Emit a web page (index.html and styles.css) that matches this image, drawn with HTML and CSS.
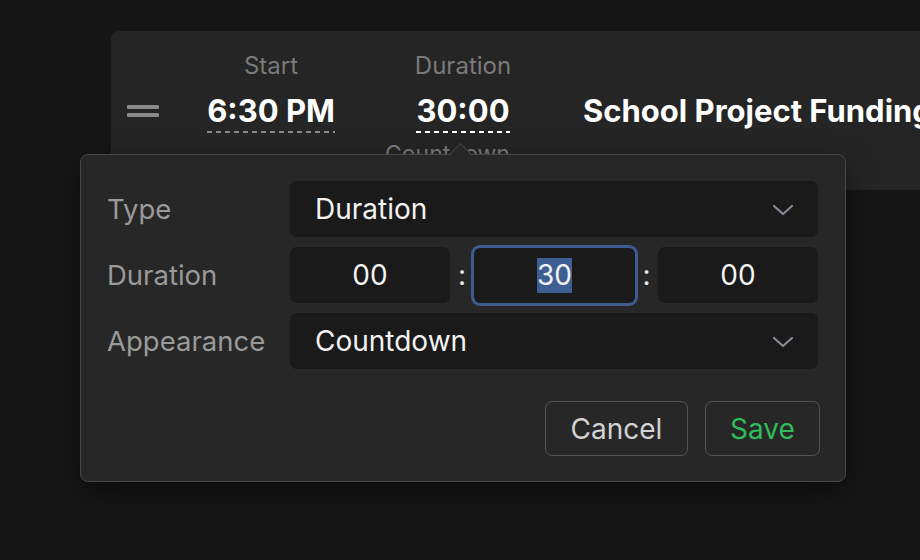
FILE: index.html
```html
<!DOCTYPE html>
<html>
<head>
<meta charset="utf-8">
<link rel="stylesheet" href="styles.css">
</head>
<body>
<div class="stage">
  <div class="row-card">
    <div class="handle"><span></span><span></span></div>
    <div class="col col-start">
      <div class="col-label">Start</div>
      <div class="col-value dashed-gray">6:30 PM</div>
    </div>
    <div class="col col-duration">
      <div class="col-label">Duration</div>
      <div class="col-value dashed-white">30:00</div>
      <div class="col-sub">Countdown</div>
    </div>
    <div class="title">School Project Funding</div>
  </div>

  <div class="popover">
    <div class="arrow"></div>
    <div class="form">
      <div class="f-label">Type</div>
      <div class="select">
        <span>Duration</span>
        <svg class="chev" width="22" height="12" viewBox="0 0 22 12"><path d="M2 2 L11 10 L20 2" fill="none" stroke="#8a8a96" stroke-width="2.2" stroke-linecap="round" stroke-linejoin="round"/></svg>
      </div>
      <div class="f-label">Duration</div>
      <div class="time">
        <div class="tbox">00</div>
        <div class="colon">:</div>
        <div class="tbox focus"><span class="sel">30</span></div>
        <div class="colon">:</div>
        <div class="tbox">00</div>
      </div>
      <div class="f-label">Appearance</div>
      <div class="select">
        <span>Countdown</span>
        <svg class="chev" width="22" height="12" viewBox="0 0 22 12"><path d="M2 2 L11 10 L20 2" fill="none" stroke="#8a8a96" stroke-width="2.2" stroke-linecap="round" stroke-linejoin="round"/></svg>
      </div>
    </div>
    <div class="actions">
      <div class="btn cancel">Cancel</div>
      <div class="btn save">Save</div>
    </div>
  </div>
</div>
</body>
</html>
```

FILE: styles.css
```css
html, body {
  margin: 0;
  padding: 0;
  width: 920px;
  height: 560px;
  overflow: hidden;
  background: #161616;
  font-family: Inter, "Noto Sans", sans-serif;
}

.stage {
  position: relative;
  width: 920px;
  height: 560px;
  padding-top: 31px;
  padding-left: 111px;
  box-sizing: border-box;
  overflow: hidden;
}

.row-card {
  width: 809px;
  height: 159px;
  background: #252525;
  border-radius: 8px 0 0 8px;
  display: flex;
  align-items: flex-start;
  padding: 20px 0 0 16px;
  box-sizing: border-box;
  white-space: nowrap;
  overflow: hidden;
}

.handle {
  flex: 0 0 32px;
  margin-top: 54px;
  display: flex;
  flex-direction: column;
  gap: 4px;
}
.handle span {
  display: block;
  height: 4px;
  background: #8a8a8a;
  border-radius: 1px;
}

.col {
  flex: 0 0 auto;
  display: flex;
  flex-direction: column;
  align-items: center;
}
.col-start {
  width: 142px;
  margin-left: 41px;
}
.col-duration {
  width: 126px;
  margin-left: 58px;
}

.col-label {
  font-size: 24px;
  line-height: 30px;
  color: #7a7a7a;
}
.col-value {
  margin-top: 12px;
  font-size: 31px;
  line-height: 36px;
  font-weight: 700;
  color: #ffffff;
  padding-bottom: 4px;
  background-repeat: repeat-x;
  background-position: left bottom;
  background-size: 9px 2px;
}
.dashed-gray {
  background-image: linear-gradient(to right, #8a8a8a 0 5px, transparent 5px 9px);
}
.dashed-white {
  background-image: linear-gradient(to right, #ffffff 0 5px, transparent 5px 9px);
}
.col-sub {
  align-self: flex-start;
  margin-left: -15px;
  margin-top: 9px;
  font-size: 23px;
  line-height: 24px;
  color: #7a7a7a;
}

.title {
  flex: 0 0 auto;
  margin-left: 57px;
  margin-top: 42px;
  font-size: 31px;
  line-height: 36px;
  font-weight: 700;
  color: #ffffff;
}

.popover {
  position: absolute;
  left: 80px;
  top: 154px;
  width: 766px;
  height: 328px;
  box-sizing: border-box;
  background: #272727;
  border: 1px solid #474747;
  border-radius: 8px;
  box-shadow: 0 10px 30px rgba(0, 0, 0, 0.45);
  padding: 26px 27px 25px 26px;
  display: flex;
  flex-direction: column;
}

.arrow {
  position: absolute;
  top: -9px;
  left: 372px;
  width: 15px;
  height: 15px;
  background: #272727;
  border-top: 1px solid #474747;
  border-left: 1px solid #474747;
  transform: rotate(45deg);
  box-sizing: border-box;
}

.form {
  display: grid;
  grid-template-columns: 183px 528px;
  grid-auto-rows: 56px;
  row-gap: 10px;
  align-items: center;
}

.f-label {
  font-size: 27.5px;
  color: #9a9a9a;
  padding-left: 0;
}

.select {
  height: 56px;
  background: #1a1a1a;
  border-radius: 7px;
  display: flex;
  align-items: center;
  justify-content: space-between;
  padding: 0 24px 0 25px;
  font-size: 28px;
  color: #f2f2f2;
}
.chev {
  display: block;
  margin-top: 1px;
}

.time {
  display: flex;
  align-items: center;
  height: 56px;
}
.tbox {
  width: 160px;
  height: 56px;
  background: #1a1a1a;
  border-radius: 7px;
  display: flex;
  align-items: center;
  justify-content: center;
  font-size: 28px;
  color: #f2f2f2;
}
.tbox.focus {
  width: 161px;
  height: 55px;
  box-shadow: 0 0 0 3px #3e5c91;
  border-radius: 6px;
}
.colon {
  width: 24px;
  text-align: center;
  font-size: 28px;
  color: #e8e8e8;
}
.tbox.focus + .colon {
  width: 23px;
}
.sel {
  background: #3e5f93;
  line-height: 35px;
}

.actions {
  margin-top: 32px;
  display: flex;
  justify-content: flex-end;
  gap: 17px;
  margin-right: -2px;
}
.btn {
  height: 55px;
  box-sizing: border-box;
  border: 1.5px solid #545454;
  border-radius: 7px;
  display: flex;
  align-items: center;
  justify-content: center;
  font-size: 28px;
}
.cancel {
  width: 143px;
  color: #d2d2d2;
}
.save {
  width: 115px;
  color: #2fbd5c;
}
```
